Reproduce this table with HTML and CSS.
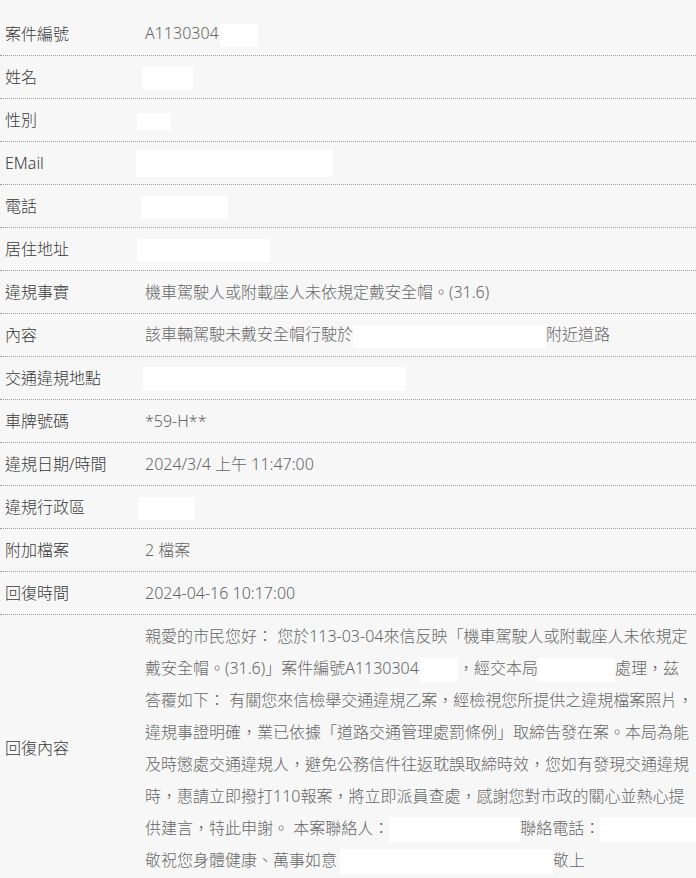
FILE: index.html
```html
<!DOCTYPE html>
<html lang="zh-Hant">
<head>
<meta charset="utf-8">
<title>案件資料</title>
<link rel="stylesheet" href="styles.css">
</head>
<body>
<div class="sheet">
  <div class="row"><div class="label">案件編號</div><div class="value">A1130304<span class="mask m-case"></span></div></div>
  <div class="row"><div class="label">姓名</div><div class="value"><span class="mask m-name"></span></div></div>
  <div class="row"><div class="label">性別</div><div class="value"><span class="mask m-sex"></span></div></div>
  <div class="row"><div class="label">EMail</div><div class="value"><span class="mask m-mail"></span></div></div>
  <div class="row"><div class="label">電話</div><div class="value"><span class="mask m-tel"></span></div></div>
  <div class="row"><div class="label">居住地址</div><div class="value"><span class="mask m-addr"></span></div></div>
  <div class="row"><div class="label">違規事實</div><div class="value">機車駕駛人或附載座人未依規定戴安全帽。(31.6)</div></div>
  <div class="row"><div class="label">內容</div><div class="value">該車輛駕駛未戴安全帽行駛於<span class="mask m-place"></span>附近道路</div></div>
  <div class="row"><div class="label">交通違規地點</div><div class="value"><span class="mask m-loc"></span></div></div>
  <div class="row"><div class="label">車牌號碼</div><div class="value">*59-H**</div></div>
  <div class="row"><div class="label">違規日期/時間</div><div class="value">2024/3/4 上午 11:47:00</div></div>
  <div class="row"><div class="label">違規行政區</div><div class="value"><span class="mask m-dist"></span></div></div>
  <div class="row"><div class="label">附加檔案</div><div class="value">2 檔案</div></div>
  <div class="row"><div class="label">回復時間</div><div class="value">2024-04-16 10:17:00</div></div>
  <div class="row row-reply">
    <div class="label">回復內容</div>
    <div class="value reply">親愛的市民您好： 您於113-03-04來信反映「機車駕駛人或附載座人未依規定<br>戴安全帽。(31.6)」案件編號A1130304<span class="mask m-r1"></span>，經交本局<span class="mask m-r2"></span>處理，茲<br>答覆如下： 有關您來信檢舉交通違規乙案，經檢視您所提供之違規檔案照片，<br>違規事證明確，業已依據「道路交通管理處罰條例」取締告發在案。本局為能<br>及時懲處交通違規人，避免公務信件往返耽誤取締時效，您如有發現交通違規<br>時，惠請立即撥打110報案，將立即派員查處，感謝您對市政的關心並熱心提<br>供建言，特此申謝。 本案聯絡人：<span class="mask m-r3"></span>聯絡電話：<span class="mask m-r4"></span><br>敬祝您身體健康、萬事如意<span class="mask m-r5"></span>敬上</div>
  </div>
</div>
</body>
</html>
```

FILE: styles.css
```css
html, body {
  margin: 0;
  padding: 0;
  background: #f7f7f7;
}

body {
  font-family: "Noto Sans", "Noto Sans CJK TC", sans-serif;
  font-size: 16px;
  font-weight: 300;
  color: #666;
  overflow: hidden;
}

.sheet {
  padding-top: 13px;
}

.row {
  display: grid;
  grid-template-columns: 140px 1fr;
  align-items: center;
  min-height: 42px;
  padding-left: 5px;
  border-bottom: 1px dotted #9a9a9a;
}

.label {
  color: #3a3a3a;
  line-height: 24px;
  white-space: nowrap;
}

.value {
  line-height: 24px;
  white-space: nowrap;
}

.row-reply {
  border-bottom: none;
  padding-top: 5px;
  padding-bottom: 2px;
}

.reply {
  line-height: 32px;
}

.mask {
  display: inline-block;
  vertical-align: middle;
  height: 23px;
  background: #fff;
}

.m-case { width: 38px; margin-left: 1px; }
.m-name { width: 51px; margin-left: -3px; }
.m-sex { width: 34px; height: 17px; margin-left: -8px; }
.m-mail { width: 197px; height: 27px; margin-left: -9px; }
.m-tel { width: 87px; margin-left: -4px; }
.m-addr { width: 133px; margin-left: -8px; }
.m-place { width: 193px; }
.m-loc { width: 263px; height: 24px; margin-left: -2px; }
.m-dist { width: 57px; margin-left: -7px; }
.m-r1 { width: 38px; height: 24px; margin-left: 1px; }
.m-r2 { width: 77px; height: 24px; }
.m-r3 { width: 131px; height: 25px; }
.m-r4 { width: 100px; height: 25px; }
.m-r5 { width: 213px; height: 25px; margin-left: 3px; }
```
